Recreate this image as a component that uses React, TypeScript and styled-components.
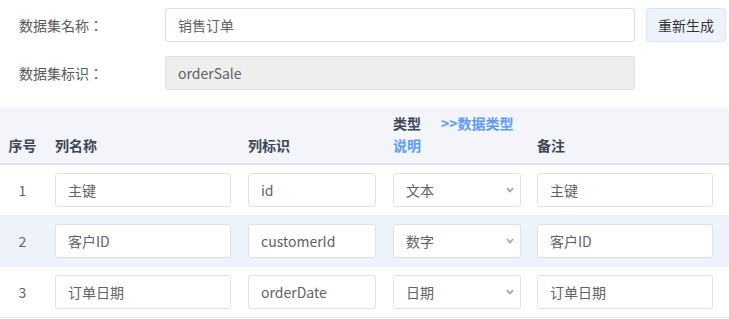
import styled, { createGlobalStyle } from "styled-components";

const GlobalStyle = createGlobalStyle`
	body {
		margin: 0;
		background: #ffffff;
		font-family: "Noto Sans CJK SC", "Noto Sans", "Liberation Sans", sans-serif;
		font-size: 14px;
		color: #606266;
	}
`;

const Page = styled.div`
	width: 729px;
	padding-top: 8px;
`;

const Form = styled.div`
	display: flex;
	flex-direction: column;
	gap: 14px;
	padding-left: 19px;
`;

const FormRow = styled.div`
	display: flex;
	align-items: center;
	height: 34px;
`;

const Label = styled.label`
	width: 146px;
	color: #5a5a5a;
	font-size: 14px;
	font-family: "Noto Sans CJK JP", "Noto Sans CJK SC", sans-serif;
`;

const TextInput = styled.input<{ $width: number; $disabled?: boolean }>`
	box-sizing: border-box;
	width: ${(p) => p.$width}px;
	height: 34px;
	padding: 0 12px;
	border: 1px solid #dde1e8;
	border-radius: 3px;
	background: ${(p) => (p.$disabled ? "#eeeeee" : "#ffffff")};
	color: #606266;
	font-family: inherit;
	font-size: 14px;
	outline: none;
`;

const Button = styled.button`
	box-sizing: border-box;
	margin-left: 11px;
	width: 80px;
	height: 34px;
	border: 1px solid #dfe5ef;
	border-radius: 3px;
	background: #eef3fb;
	color: #333333;
	font-family: inherit;
	font-size: 14px;
	padding: 0;
`;

const Table = styled.div`
	margin-top: 17px;
`;

const Grid = styled.div`
	display: grid;
	grid-template-columns: 55px 193px 145px 144px 192px;
`;

const HeadRow = styled(Grid)`
	box-sizing: border-box;
	height: 58px;
	padding-bottom: 7px;
	background: #f3f5fa;
	border-bottom: 2px solid #dfe4ed;
	align-items: end;
`;

const HeadCell = styled.div<{ $center?: boolean }>`
	font-weight: bold;
	color: #3b4659;
	line-height: 22px;
	${(p) => (p.$center ? "text-align: center; padding-right: 10px;" : "")}
`;

const HeadLine = styled.div`
	display: flex;
	gap: 20px;
`;

const Link = styled.a`
	color: #5c9cf6;
	text-decoration: none;
`;

const Row = styled(Grid)<{ $striped?: boolean }>`
	height: 51px;
	box-sizing: border-box;
	align-items: center;
	background: ${(p) => (p.$striped ? "#eef3fb" : "#ffffff")};
	border-bottom: 1px solid #e4e9f2;
`;

const SeqCell = styled.div`
	text-align: center;
	padding-right: 10px;
	color: #606266;
`;

const SelectBox = styled.div`
	position: relative;
	box-sizing: border-box;
	width: 128px;
	height: 34px;
	display: flex;
	align-items: center;
	padding: 0 12px;
	border: 1px solid #dde1e8;
	border-radius: 3px;
	background: #ffffff;
	color: #606266;
`;

const Chevron = styled.svg`
	position: absolute;
	right: 6px;
	top: 13px;
`;

const rows = [
	{ name: "主键", code: "id", type: "文本", remark: "主键" },
	{ name: "客户ID", code: "customerId", type: "数字", remark: "客户ID" },
	{ name: "订单日期", code: "orderDate", type: "日期", remark: "订单日期" },
];

export default function App(): JSX.Element {
	return (
		<>
			<GlobalStyle />
			<Page>
				<Form>
					<FormRow>
						<Label>数据集名称：</Label>
						<TextInput $width={470} defaultValue="销售订单" />
						<Button>重新生成</Button>
					</FormRow>
					<FormRow>
						<Label>数据集标识：</Label>
						<TextInput $width={470} $disabled defaultValue="orderSale" readOnly />
					</FormRow>
				</Form>
				<Table>
					<HeadRow>
						<HeadCell $center>序号</HeadCell>
						<HeadCell>列名称</HeadCell>
						<HeadCell>列标识</HeadCell>
						<HeadCell>
							<HeadLine>
								<span>类型</span>
								<Link href="#">&gt;&gt;数据类型</Link>
							</HeadLine>
							<Link href="#">说明</Link>
						</HeadCell>
						<HeadCell>备注</HeadCell>
					</HeadRow>
					{rows.map((r, i) => (
						<Row key={r.code} $striped={i === 1}>
							<SeqCell>{i + 1}</SeqCell>
							<div>
								<TextInput $width={176} defaultValue={r.name} />
							</div>
							<div>
								<TextInput $width={128} defaultValue={r.code} />
							</div>
							<div>
								<SelectBox>
									{r.type}
									<Chevron width="8" height="6" viewBox="0 0 8 6">
										<path d="M1 1 L4 4.5 L7 1" fill="none" stroke="#a0a0a0" strokeWidth="1.6" />
									</Chevron>
								</SelectBox>
							</div>
							<div>
								<TextInput $width={176} defaultValue={r.remark} />
							</div>
						</Row>
					))}
				</Table>
			</Page>
		</>
	);
}
